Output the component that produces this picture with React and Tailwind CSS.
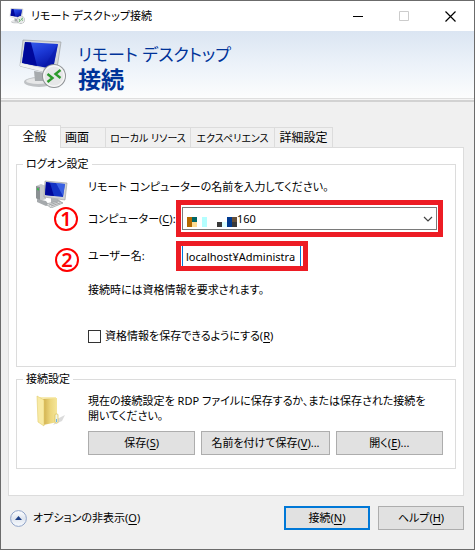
import React from "react";

const RemoteBadge = () => (
  <g>
    <circle cx="36" cy="37" r="12" fill="#8f9396" />
    <circle cx="36" cy="37" r="11" fill="#f6f6f6" />
    <circle cx="36" cy="37" r="9.5" fill="#e6e7e8" />
    <path d="M29.5 35l5 4-5 4" fill="none" stroke="#2c9a2c" strokeWidth="2.4" />
    <path d="M42.5 31l-5 4 5 4" fill="none" stroke="#2c9a2c" strokeWidth="2.4" />
  </g>
);

function RemoteIcon({ className, id }) {
  return (
    <svg viewBox="0 0 48 50" className={className} aria-hidden="true">
      <defs>
        <linearGradient id={id} x1="0" y1="0" x2="0.6" y2="1">
          <stop offset="0" stopColor="#3a62ee" />
          <stop offset="0.5" stopColor="#1c39d6" />
          <stop offset="1" stopColor="#0612a4" />
        </linearGradient>
      </defs>
      <ellipse cx="21" cy="43" rx="15" ry="5" fill="#bfc2c5" />
      <ellipse cx="20" cy="42" rx="12" ry="3" fill="#e6e7e8" />
      <path d="M16 32l11 2 1 8H17z" fill="#a7abae" />
      <path d="M5 1l38 2-5 33L2 27z" fill="#d6d9db" stroke="#9ca0a4" strokeWidth="0.7" />
      <path d="M7 3l33 2-5 25L4 24z" fill={`url(#${id})`} />
      <path d="M7 3l6 .4 6 23.500L4 24z" fill="#00089a" />
      <path d="M40 5l-5 25-9-2z" fill="#0818a8" opacity="0.5" />
      <path d="M2 27l36 9 .5-3L2.500 24z" fill="#f1f2f2" />
      <RemoteBadge />
    </svg>
  );
}

const PcIcon = () => (
  <svg viewBox="0 0 32 28" className="h-7 w-8" aria-hidden="true">
    <path d="M0 6l5-2 5 2v13l-6 2-4-3z" fill="#c6c9cb" />
    <path d="M0 6l4 1v14l-4-3z" fill="#8b9093" />
    <path d="M1 8l2 .6v2L1 10z" fill="#39b54a" />
    <path d="M9 1l22 2-2 17-21-3z" fill="#cfd2d4" stroke="#999" strokeWidth="0.6" />
    <path d="M10 2l19 2-2 13L9 15z" fill="#1232c4" />
    <path d="M10 2l4 1 4 13-9-1z" fill="#00089a" />
    <path d="M20 3l9 1-2 12z" fill="#4a74f0" opacity="0.7" />
    <path d="M15 18l7 1 5 4-12 1z" fill="#aeb2b5" />
    <path d="M1 19l9 2 3 4-3 1-9-4z" fill="#a5a9ac" />
    <path d="M10 24l12-3 5 2-12 5z" fill="#dcdedf" stroke="#9a9da0" strokeWidth="0.7" />
    <path d="M13 25l9-3M15 26l9-3" stroke="#8d9092" strokeWidth="0.7" />
  </svg>
);

const FolderIcon = () => (
  <svg viewBox="0 0 30 32" className="h-8 w-[30px]" aria-hidden="true">
    <defs>
      <linearGradient id="fold" x1="0" y1="0" x2="1" y2="0">
        <stop offset="0" stopColor="#cfae4c" />
        <stop offset="0.5" stopColor="#ecd67c" />
        <stop offset="1" stopColor="#f6e89e" />
      </linearGradient>
    </defs>
    <path d="M21 24l8-4-3 6-9 4z" fill="#000" opacity="0.14" />
    <path d="M4 2l16 0v24H6z" fill="#f8ecb4" />
    <path d="M7 4l14-1v17l1 7-15 3z" fill="url(#fold)" />
    <path d="M1 1l7 4v26l-6-4z" fill="#f8eaa4" stroke="#e3cd6c" strokeWidth="0.6" />
    <rect x="19" y="19" width="3" height="9" rx="1" fill="#f3f6e6" stroke="#d8bf50" strokeWidth="0.7" />
    <path d="M20.500 24v3" stroke="#6ab2e6" />
  </svg>
);

const TEXT = "text-[11px] leading-4";

function Key({ children }) {
  return (
    <span>
      (<span className="underline underline-offset-2">{children}</span>)
    </span>
  );
}

function Marker({ n, className }) {
  return (
    <span
      className={`absolute flex size-6 items-center justify-center rounded-full border-2 border-[#ff0000] text-[20px] font-semibold leading-none text-[#ff0000] ${className}`}
    >
      {n}
    </span>
  );
}

function Group({ title, icon, className, children }) {
  return (
    <fieldset className={`mx-[7px] border border-[#dcdcdc] pr-3 ${className}`}>
      <legend className="ml-[6px] px-[3px] text-[11px] leading-4">{title}</legend>
      <div className="flex">
        <div className="w-[71px] shrink-0 pl-[19px] pt-[8px]">{icon}</div>
        <div className="min-w-0 flex-1">{children}</div>
      </div>
    </fieldset>
  );
}

function Button({ className = "", primary, children }) {
  return (
    <button
      type="button"
      className={`h-6 whitespace-nowrap bg-[#e1e1e1] text-center text-[11px] leading-4 ${
        primary ? "border-2 border-[#0078d7]" : "border border-[#adadad]"
      } ${className}`}
    >
      {children}
    </button>
  );
}

const Mosaic = () => (
  <svg viewBox="0 0 10 2" shapeRendering="crispEdges" className="h-[10px] w-[50px]" aria-hidden="true">
    <path d="M0 0h1v2H0z" fill="#b46a00" />
    <path d="M1 0h1v1H1z" fill="#006666" />
    <path d="M1 1h1v1H1z" fill="#ffdb90" />
    <path d="M3 0h1v2H3z" fill="#b4ffff" />
    <path d="M6 1h1v1H6z" fill="#3a3a3a" />
    <path d="M7 1h1v1H7z" fill="#dbffff" />
    <path d="M8 0h1v2H8z" fill="#003a90" />
    <path d="M9 0h1v1H9z" fill="#66503a" />
    <path d="M9 1h1v1H9z" fill="#3a3a3a" />
  </svg>
);

export default function App() {
  return (
    <div className="min-h-screen border border-[#6b6b6b] bg-[#f0f0f0] font-['Noto_Sans','Noto_Sans_CJK_JP',sans-serif] text-black [font-feature-settings:'palt']">
      <header>
        <div className="flex h-[30px] items-center bg-white pl-2 pr-[18px]">
          <RemoteIcon id="small" className="size-4" />
          <h1 className={`ml-[6px] flex-1 ${TEXT}`}>リモート デスクトップ接続</h1>
          <div className="flex items-center gap-[35px]">
            <button type="button" aria-label="最小化">
              <svg className="block size-[11px]" viewBox="0 0 11 11"><path d="M0 5.500h10" stroke="#000" /></svg>
            </button>
            <button type="button" aria-label="最大化" disabled>
              <svg className="block size-[11px]" viewBox="0 0 11 11"><path d="M.5.5h9v9h-9z" fill="none" stroke="#ccc" /></svg>
            </button>
            <button type="button" aria-label="閉じる">
              <svg className="block size-[11px]" viewBox="0 0 11 11"><path d="M.5.5l10 10M10.500.5l-10 10" stroke="#000" strokeWidth="1.2" /></svg>
            </button>
          </div>
        </div>
        <div className="flex h-[67px] items-start bg-linear-to-b from-[#dbe5f2] via-[#ecf2f9] to-[#fcfdfd] pl-[17px] pt-2">
          <RemoteIcon id="large" className="h-[50px] w-12" />
          <div className="ml-3 pt-1 text-[#003399]">
            <p className="text-[17px] leading-6">リモート デスクトップ</p>
            <p className="text-[23px] font-bold leading-6">接続</p>
          </div>
        </div>
        <div className="h-1 border-b-2 border-t border-b-[#d2d2d2] border-t-[#dfdfdf] bg-[#f5f5f5]" />
      </header>

      <main className="pl-[7px] pr-[10px] pt-[23px]">
        <div role="tablist" className="relative -mb-px flex items-end text-[12px] leading-4">
          <button type="button" role="tab" aria-selected="true" className="h-[23px] w-[53px] border border-b-0 border-[#dcdcdc] bg-white">全般</button>
          <button type="button" role="tab" aria-selected="false" className="mb-px h-5 w-[45px] border-r border-t border-[#dcdcdc] pr-3">画面</button>
          <button type="button" role="tab" aria-selected="false" className="mb-px h-5 w-[85px] whitespace-nowrap border-r border-t border-[#dcdcdc] text-[10px]">ローカル リソース</button>
          <button type="button" role="tab" aria-selected="false" className="mb-px h-5 w-[84px] whitespace-nowrap border-r border-t border-[#dcdcdc] text-[10px]">エクスペリエンス</button>
          <button type="button" role="tab" aria-selected="false" className="mb-px h-5 w-[58px] border-r border-t border-[#dcdcdc]">詳細設定</button>
        </div>

        <section className="border border-[#dcdcdc] bg-white pb-[26px] pt-2">
          <Group title="ログオン設定" icon={<PcIcon />} className="pb-[22px]">
            <p className={`pt-[7px] ${TEXT}`}>リモート コンピューターの名前を入力してください。</p>

            <div className="relative mt-[5px] flex items-center">
              <Marker n="1" className="-left-[34px] top-[7px]" />
              <label htmlFor="computer" className={`w-[88px] shrink-0 whitespace-nowrap ${TEXT}`}>
                コンピューター<Key>C</Key>:
              </label>
              <div className="relative flex-1 border-[5px] border-[#ed1c24] px-px py-[2px]">
                <select id="computer" className="block h-[23px] w-full appearance-none border border-[#7a7a7a] bg-white pl-[54px] text-[11px] leading-4">
                  <option>160</option>
                </select>
                <svg viewBox="0 0 10 6" className="pointer-events-none absolute right-[5px] top-[11px] h-[6px] w-[10px]" aria-hidden="true">
                  <path d="M1 1l4 4 4-4" fill="none" stroke="#444" strokeWidth="1.200" />
                </svg>
                <div className="pointer-events-none absolute left-[6px] top-3">
                  <Mosaic />
                </div>
              </div>
            </div>

            <div className="relative mt-1 flex items-center">
              <Marker n="2" className="-left-[33px] top-[7px]" />
              <label htmlFor="user" className={`w-[88px] shrink-0 ${TEXT}`}>ユーザー名:</label>
              <div className="w-[132px] border-[5px] border-[#ed1c24] bg-white pl-px pr-[2px]">
                <input
                  id="user"
                  type="text"
                  defaultValue="localhost¥Administra"
                  className="block h-5 w-full border-x border-[#0078d7] bg-white pl-[3px] text-[11px] leading-4 outline-none"
                />
              </div>
            </div>

            <p className={`mt-[11px] ${TEXT}`}>接続時には資格情報を要求されます。</p>

            <label className={`mt-[30px] flex items-center gap-1 ${TEXT}`}>
              <input type="checkbox" className="size-[13px] appearance-none border border-[#333] bg-white" />
              <span>資格情報を保存できるようにする<Key>R</Key></span>
            </label>
          </Group>

          <Group title="接続設定" icon={<FolderIcon />} className="mt-1 pb-[13px]">
            <p className="pt-[6px] text-[11px] leading-[15px]">
              現在の接続設定を RDP ファイルに保存するか、または保存された接続を
              <br />
              開いてください。
            </p>
            <div className="mt-2 grid grid-cols-[107fr_128fr_107fr] gap-[6px]">
              <Button>保存<Key>S</Key></Button>
              <Button>名前を付けて保存<Key>V</Key>...</Button>
              <Button>開く<Key>E</Key>...</Button>
            </div>
          </Group>
        </section>
      </main>

      <footer className="flex items-center pb-[18px] pl-[9px] pr-[10px] pt-[10px]">
        <button type="button" className={`flex items-center gap-[6px] ${TEXT}`}>
          <svg viewBox="0 0 17 17" className="size-[17px]" aria-hidden="true">
            <defs>
              <linearGradient id="round" x1="0" y1="0" x2="0" y2="1">
                <stop offset="0" stopColor="#fff" />
                <stop offset="0.5" stopColor="#dfe5ee" />
                <stop offset="1" stopColor="#f8fbff" />
              </linearGradient>
            </defs>
            <circle cx="8.500" cy="8.500" r="7.900" fill="url(#round)" stroke="#8fa3c8" />
            <path d="M5 10l3.500-4 3.500 4z" fill="#1d3f86" />
          </svg>
          <span>オプションの非表示<Key>O</Key></span>
        </button>
        <div className="ml-auto flex gap-2">
          <Button primary className="w-[86px]">接続<Key>N</Key></Button>
          <Button className="w-[86px]">ヘルプ<Key>H</Key></Button>
        </div>
      </footer>
    </div>
  );
}
